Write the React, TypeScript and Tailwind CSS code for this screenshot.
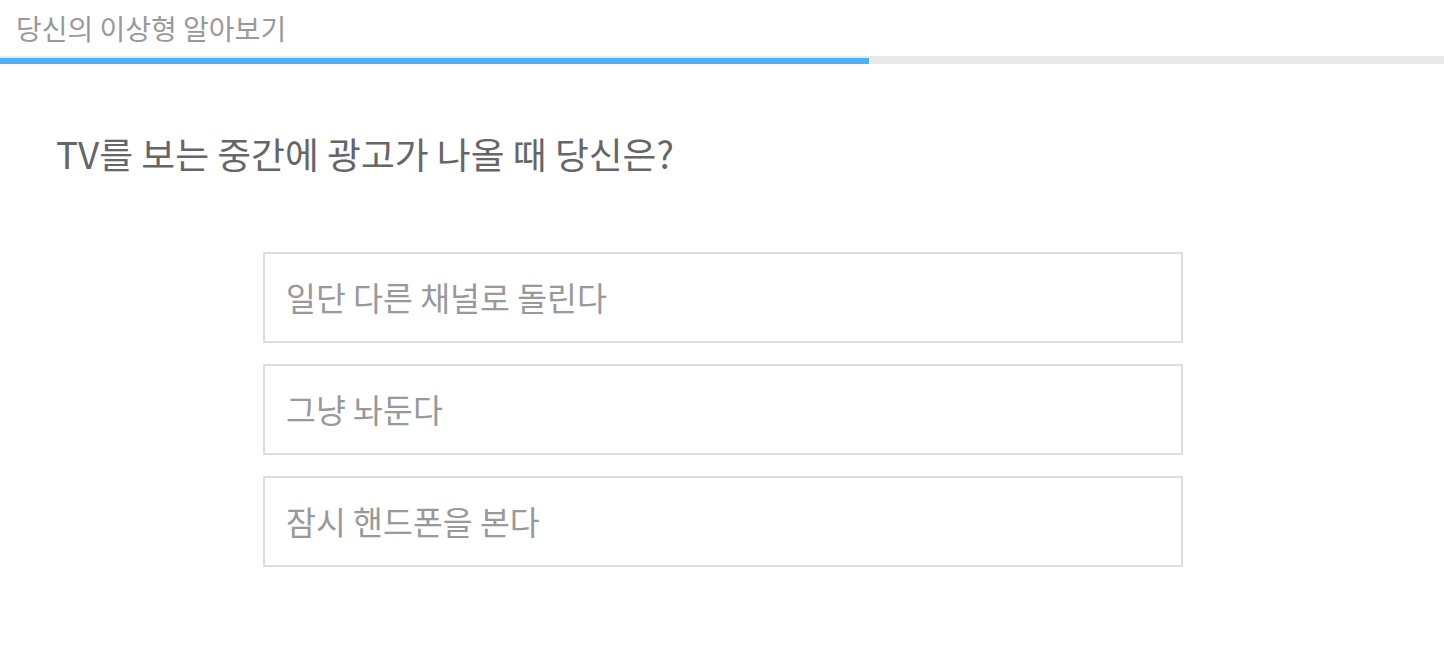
export default function App() {
  const options = ["일단 다른 채널로 돌린다", "그냥 놔둔다", "잠시 핸드폰을 본다"];
  return (
    <div
      className="w-[1444px] h-[648px] bg-white overflow-hidden"
      style={{ fontFamily: '"Noto Sans CJK KR", "Noto Sans", sans-serif' }}
    >
      <div className="h-[56px] pl-[16px] flex items-center">
        <h1 className="text-[28px] leading-none text-[#999999] font-normal">당신의 이상형 알아보기</h1>
      </div>
      <div className="h-[8px] bg-[#e9e9e9] flex items-end">
        <div className="h-[6px] w-[869px] bg-[#4fb0f5]" />
      </div>
      <div className="pt-[71px] pl-[56px]">
        <h2 className="text-[36.8px] leading-none text-[#666666] font-normal">TV를 보는 중간에 광고가 나올 때 당신은?</h2>
      </div>
      <div className="mt-[80px] flex flex-col items-center gap-[21px]">
        {options.map((o) => (
          <div
            key={o}
            className="w-[920px] h-[91px] border-2 border-[#dddddd] ml-[2px] flex items-center pl-[21px]"
          >
            <span className="text-[32.5px] leading-none text-[#999999]">{o}</span>
          </div>
        ))}
      </div>
    </div>
  );
}
